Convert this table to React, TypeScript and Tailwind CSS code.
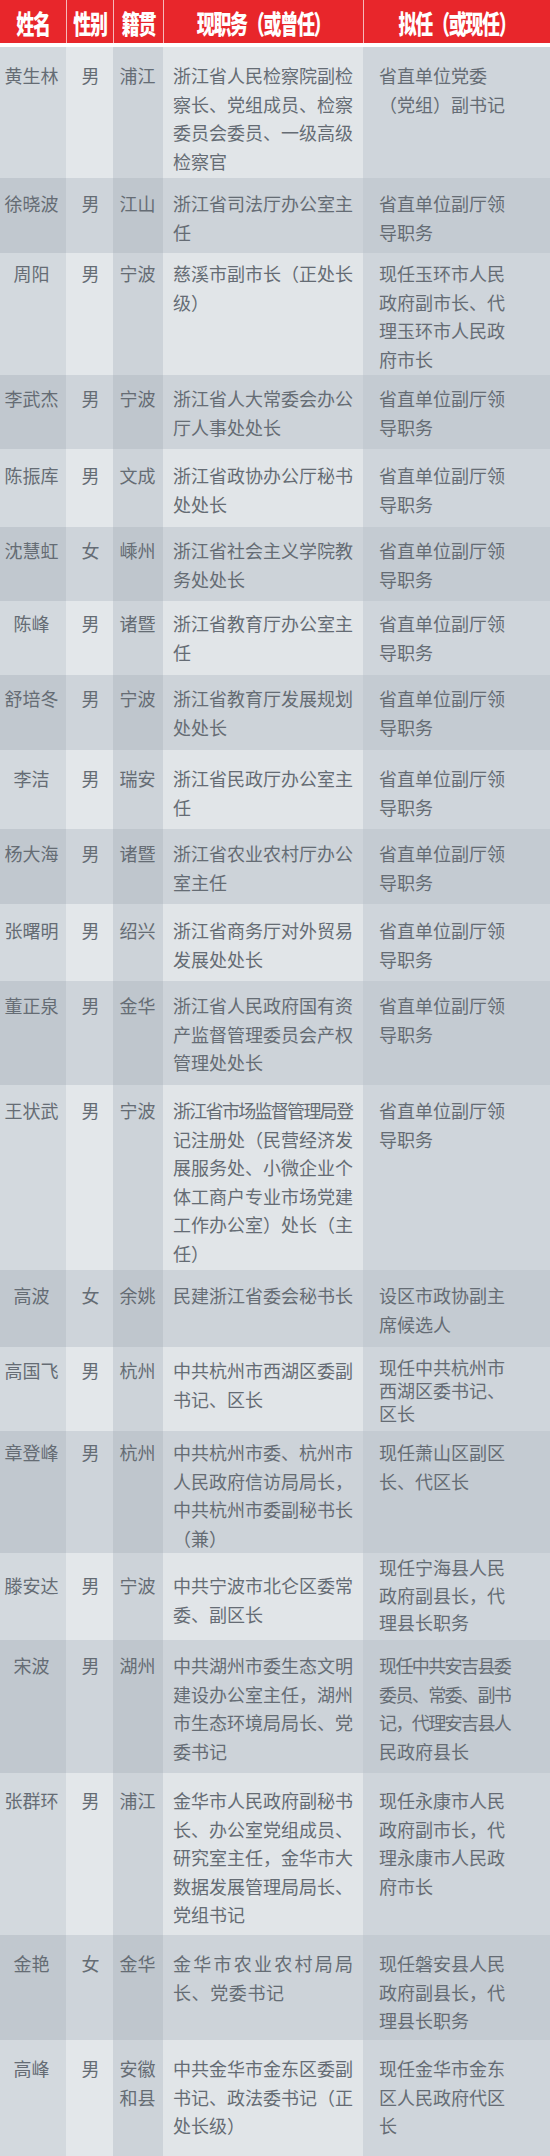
type Row = {
  name: string;
  sex: string;
  home: string[];
  job: string[];
  next: string[];
  h: string;
  pt: string;
  nextPt?: string;
  nextLeading?: string;
};

const rows: Row[] = [
  {
    name: "黄生林",
    sex: "男",
    home: ["浦江"],
    job: ["浙江省人民检察院副检", "察长、党组成员、检察", "委员会委员、一级高级", "检察官"],
    next: ["省直单位党委", "（党组）副书记"],
    h: "h-[131px]",
    pt: "pt-[14px]",
  },
  {
    name: "徐晓波",
    sex: "男",
    home: ["江山"],
    job: ["浙江省司法厅办公室主", "任"],
    next: ["省直单位副厅领", "导职务"],
    h: "h-[75px]",
    pt: "pt-[11px]",
  },
  {
    name: "周阳",
    sex: "男",
    home: ["宁波"],
    job: ["慈溪市副市长（正处长", "级）"],
    next: ["现任玉环市人民", "政府副市长、代", "理玉环市人民政", "府市长"],
    h: "h-[122px]",
    pt: "pt-[6px]",
  },
  {
    name: "李武杰",
    sex: "男",
    home: ["宁波"],
    job: ["浙江省人大常委会办公", "厅人事处处长"],
    next: ["省直单位副厅领", "导职务"],
    h: "h-[74px]",
    pt: "pt-[9px]",
  },
  {
    name: "陈振库",
    sex: "男",
    home: ["文成"],
    job: ["浙江省政协办公厅秘书", "处处长"],
    next: ["省直单位副厅领", "导职务"],
    h: "h-[78px]",
    pt: "pt-[12px]",
  },
  {
    name: "沈慧虹",
    sex: "女",
    home: ["嵊州"],
    job: ["浙江省社会主义学院教", "务处处长"],
    next: ["省直单位副厅领", "导职务"],
    h: "h-[74px]",
    pt: "pt-[9px]",
  },
  {
    name: "陈峰",
    sex: "男",
    home: ["诸暨"],
    job: ["浙江省教育厅办公室主", "任"],
    next: ["省直单位副厅领", "导职务"],
    h: "h-[74px]",
    pt: "pt-[8px]",
  },
  {
    name: "舒培冬",
    sex: "男",
    home: ["宁波"],
    job: ["浙江省教育厅发展规划", "处处长"],
    next: ["省直单位副厅领", "导职务"],
    h: "h-[75px]",
    pt: "pt-[9px]",
  },
  {
    name: "李洁",
    sex: "男",
    home: ["瑞安"],
    job: ["浙江省民政厅办公室主", "任"],
    next: ["省直单位副厅领", "导职务"],
    h: "h-[79px]",
    pt: "pt-[14px]",
  },
  {
    name: "杨大海",
    sex: "男",
    home: ["诸暨"],
    job: ["浙江省农业农村厅办公", "室主任"],
    next: ["省直单位副厅领", "导职务"],
    h: "h-[75px]",
    pt: "pt-[10px]",
  },
  {
    name: "张曙明",
    sex: "男",
    home: ["绍兴"],
    job: ["浙江省商务厅对外贸易", "发展处处长"],
    next: ["省直单位副厅领", "导职务"],
    h: "h-[77px]",
    pt: "pt-[12px]",
  },
  {
    name: "董正泉",
    sex: "男",
    home: ["金华"],
    job: ["浙江省人民政府国有资", "产监督管理委员会产权", "管理处处长"],
    next: ["省直单位副厅领", "导职务"],
    h: "h-[104px]",
    pt: "pt-[10px]",
  },
  {
    name: "王状武",
    sex: "男",
    home: ["宁波"],
    job: [
      "浙江省市场监督管理局登",
      "记注册处（民营经济发",
      "展服务处、小微企业个",
      "体工商户专业市场党建",
      "工作办公室）处长（主",
      "任）",
    ],
    next: ["省直单位副厅领", "导职务"],
    h: "h-[185px]",
    pt: "pt-[11px]",
  },
  {
    name: "高波",
    sex: "女",
    home: ["余姚"],
    job: ["民建浙江省委会秘书长"],
    next: ["设区市政协副主", "席候选人"],
    h: "h-[77px]",
    pt: "pt-[11px]",
  },
  {
    name: "高国飞",
    sex: "男",
    home: ["杭州"],
    job: ["中共杭州市西湖区委副", "书记、区长"],
    next: ["现任中共杭州市", "西湖区委书记、", "区长"],
    h: "h-[84px]",
    pt: "pt-[9px]",
    nextPt: "pt-[9px]",
    nextLeading: "leading-[23px]",
  },
  {
    name: "章登峰",
    sex: "男",
    home: ["杭州"],
    job: ["中共杭州市委、杭州市", "人民政府信访局局长，", "中共杭州市委副秘书长", "（兼）"],
    next: ["现任萧山区副区", "长、代区长"],
    h: "h-[122px]",
    pt: "pt-[7px]",
  },
  {
    name: "滕安达",
    sex: "男",
    home: ["宁波"],
    job: ["中共宁波市北仑区委常", "委、副区长"],
    next: ["现任宁海县人民", "政府副县长，代", "理县长职务"],
    h: "h-[87px]",
    pt: "pt-[18px]",
    nextPt: "pt-[1px]",
    nextLeading: "leading-[27.5px]",
  },
  {
    name: "宋波",
    sex: "男",
    home: ["湖州"],
    job: ["中共湖州市委生态文明", "建设办公室主任，湖州", "市生态环境局局长、党", "委书记"],
    next: ["现任中共安吉县委", "委员、常委、副书", "记，代理安吉县人", "民政府县长"],
    h: "h-[133px]",
    pt: "pt-[11px]",
  },
  {
    name: "张群环",
    sex: "男",
    home: ["浦江"],
    job: ["金华市人民政府副秘书", "长、办公室党组成员、", "研究室主任，金华市大", "数据发展管理局局长、", "党组书记"],
    next: ["现任永康市人民", "政府副市长，代", "理永康市人民政", "府市长"],
    h: "h-[162px]",
    pt: "pt-[13px]",
  },
  {
    name: "金艳",
    sex: "女",
    home: ["金华"],
    job: ["金华市农业农村局局", "长、党委书记"],
    next: ["现任磐安县人民", "政府副县长，代", "理县长职务"],
    h: "h-[105px]",
    pt: "pt-[14px]",
  },
  {
    name: "高峰",
    sex: "男",
    home: ["安徽", "和县"],
    job: ["中共金华市金东区委副", "书记、政法委书记（正", "处长级）"],
    next: ["现任金华市金东", "区人民政府代区", "长"],
    h: "h-[116px]",
    pt: "pt-[14px]",
  },
];

const light = ["bg-[#d3d9de]", "bg-[#e3e7ea]", "bg-[#cdd3d9]", "bg-[#e1e5e8]", "bg-[#cfd5db]"];
const dark = ["bg-[#c1c8cf]", "bg-[#ced4da]", "bg-[#bfc6cd]", "bg-[#cdd3d9]", "bg-[#c4cbd2]"];

const jobTrack = (line: string) => {
  if (line.length > 10) return "tracking-[-1.7px]";
  if (line === "金华市农业农村局局") return "tracking-[2.25px]";
  if (line === "长、党委书记") return "tracking-[0.6px]";
  return "";
};

const nextTrack = (line: string) => (line.length > 7 ? "tracking-[-1.6px]" : "");

const Header = () => {
  const cols = [
    { label: "姓名", w: "w-[66px]" },
    { label: "性别", w: "w-[47px]" },
    { label: "籍贯", w: "w-[50px]" },
    { label: "现职务（或曾任）", w: "w-[200px]" },
    { label: "拟任（或现任）", w: "flex-1" },
  ];
  return (
    <div className="flex h-[43px] bg-[#e8262b] border-b-4 border-white box-content">
      {cols.map((c, i) => (
        <div
          key={c.label}
          className={`${c.w} flex items-center justify-center ${i > 0 ? "border-l border-[#f6b9b9]" : ""}`}
        >
          <span className="inline-block scale-y-[1.45] text-[18px] font-black tracking-[-1.3px] text-white leading-none">
            {c.label}
          </span>
        </div>
      ))}
    </div>
  );
};

export default function App() {
  return (
    <div
      className="w-[550px] bg-white text-[18px] text-[#656c74] leading-[28.5px]"
      style={{ fontFamily: '"Noto Sans CJK SC", "Noto Sans", sans-serif' }}
    >
      <Header />
      {rows.map((r, i) => {
        const bg = i % 2 === 0 ? light : dark;
        return (
          <div key={r.name} className={`flex ${r.h}`}>
            <div className={`w-[66px] ${bg[0]} ${r.pt} pr-[3px] text-center whitespace-nowrap`}>{r.name}</div>
            <div className={`w-[47px] ${bg[1]} ${r.pt} pl-[2px] text-center`}>{r.sex}</div>
            <div className={`w-[50px] ${bg[2]} ${r.pt} pr-[1px] text-center`}>
              {r.home.map((h) => (
                <div key={h}>{h}</div>
              ))}
            </div>
            <div className={`w-[200px] ${bg[3]} ${r.pt} pl-[10px]`}>
              {r.job.map((l) => (
                <div key={l} className={`whitespace-nowrap ${jobTrack(l)}`}>
                  {l}
                </div>
              ))}
            </div>
            <div className={`flex-1 ${bg[4]} ${r.nextPt ?? r.pt} pl-[16px] ${r.nextLeading ?? ""}`}>
              {r.next.map((l) => (
                <div key={l} className={`whitespace-nowrap ${nextTrack(l)}`}>
                  {l}
                </div>
              ))}
            </div>
          </div>
        );
      })}
    </div>
  );
}
